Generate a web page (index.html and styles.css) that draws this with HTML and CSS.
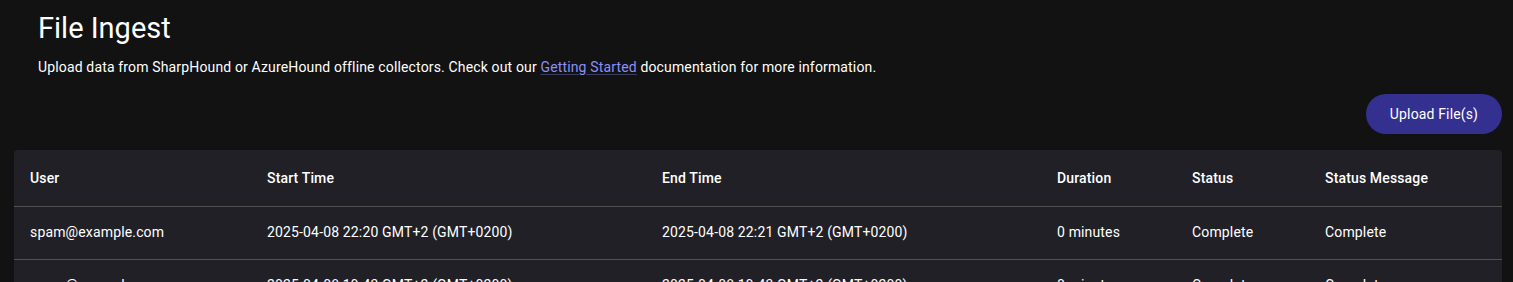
FILE: index.html
```html
<!DOCTYPE html>
<html lang="en">
<head>
<meta charset="utf-8">
<title>File Ingest</title>
<link rel="stylesheet" href="styles.css">
</head>
<body>
<main class="page">
  <header class="intro">
    <h1 class="title">File Ingest</h1>
    <p class="lead">Upload data from SharpHound or AzureHound offline collectors. Check out our <a class="link" href="#">Getting Started</a> documentation for more information.</p>
  </header>
  <div class="actions">
    <button class="btn-primary" type="button">Upload File(s)</button>
  </div>
  <section class="card">
    <table class="grid">
      <colgroup>
        <col class="c-user"><col class="c-start"><col class="c-end"><col class="c-dur"><col class="c-status"><col class="c-msg">
      </colgroup>
      <thead>
        <tr>
          <th>User</th><th>Start Time</th><th>End Time</th><th>Duration</th><th>Status</th><th>Status Message</th>
        </tr>
      </thead>
      <tbody>
        <tr>
          <td>spam@example.com</td><td>2025-04-08 22:20 GMT+2 (GMT+0200)</td><td>2025-04-08 22:21 GMT+2 (GMT+0200)</td><td>0 minutes</td><td>Complete</td><td>Complete</td>
        </tr>
        <tr>
          <td>spam@example.com</td><td>2025-04-08 19:43 GMT+2 (GMT+0200)</td><td>2025-04-08 19:43 GMT+2 (GMT+0200)</td><td>0 minutes</td><td>Complete</td><td>Complete</td>
        </tr>
      </tbody>
    </table>
  </section>
</main>
</body>
</html>
```
FILE: styles.css
```css
* { box-sizing: border-box; }
html, body { margin: 0; padding: 0; background: #121212; }
body {
  font-family: Roboto, "Liberation Sans", Arial, sans-serif;
  color: #ffffff;
  overflow: hidden;
}
.page {
  padding: 9px 11px 0 14px;
  display: flex;
  flex-direction: column;
}
.intro { padding-left: 24px; }
.title {
  margin: 0;
  font-size: 29px;
  font-weight: 400;
  line-height: 38px;
}
.lead {
  margin: 10px 0 0;
  font-size: 14px;
  line-height: 20px;
  letter-spacing: 0.15px;
}
.link {
  color: #8b8ff8;
  text-decoration: underline;
  text-decoration-color: rgba(139, 143, 248, 0.35);
  text-underline-offset: 2px;
}
.actions {
  display: flex;
  justify-content: flex-end;
  margin-top: 17px;
}
.btn-primary {
  height: 40px;
  width: 136px;
  border: 0;
  border-radius: 20px;
  background: #33308f;
  color: #ffffff;
  font-family: inherit;
  font-size: 14px;
  font-weight: 400;
  letter-spacing: 0.15px;
  cursor: pointer;
}
.card {
  margin-top: 16px;
  background: #212027;
  border-radius: 4px;
  overflow: hidden;
}
.grid {
  width: 100%;
  border-collapse: collapse;
  table-layout: fixed;
  font-size: 14px;
  letter-spacing: 0.15px;
}
.c-user { width: 237px; }
.c-start { width: 395px; }
.c-end { width: 395px; }
.c-dur { width: 135px; }
.c-status { width: 133px; }
.c-msg { width: 193px; }
.grid th, .grid td {
  text-align: left;
  padding: 16px;
  border-bottom: 1px solid #515151;
  white-space: nowrap;
}
.grid th {
  font-weight: 500;
  line-height: 24px;
}
.grid td {
  font-weight: 400;
  line-height: 19px;
  padding-top: 16px;
  padding-bottom: 17px;
}
```
